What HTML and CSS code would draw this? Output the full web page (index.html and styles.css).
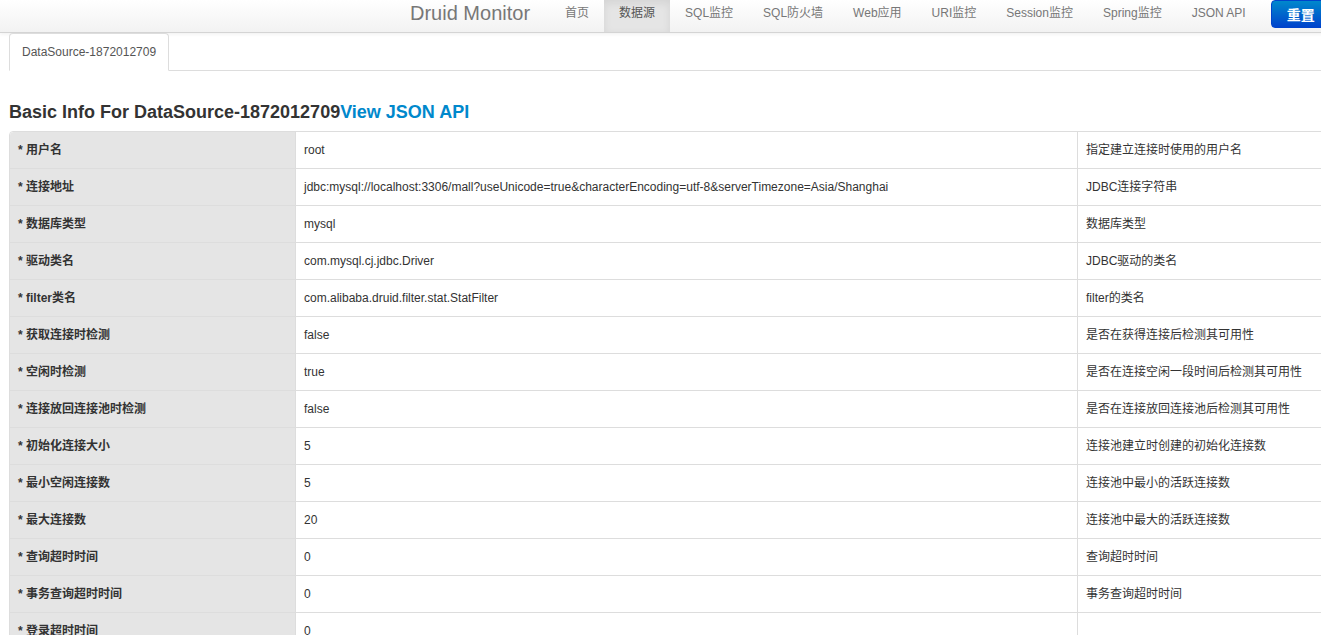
FILE: index.html
```html
<!DOCTYPE html>
<html lang="zh-CN">
<head>
<meta charset="utf-8">
<title>Druid Monitor</title>
<link rel="stylesheet" href="styles.css">
</head>
<body>
<div class="page">
  <header class="navbar">
    <a class="brand" href="#">Druid Monitor</a>
    <nav class="nav">
      <a href="#">首页</a>
      <a href="#" class="active">数据源</a>
      <a href="#">SQL监控</a>
      <a href="#">SQL防火墙</a>
      <a href="#">Web应用</a>
      <a href="#">URI监控</a>
      <a href="#">Session监控</a>
      <a href="#">Spring监控</a>
      <a href="#">JSON API</a>
    </nav>
    <button class="btn-reset">重置</button>
  </header>

  <main class="content">
    <ul class="tabs">
      <li class="tab active">DataSource-1872012709</li>
    </ul>

    <h3 class="title">Basic Info For DataSource-1872012709<a href="#" class="json-link">View JSON API</a></h3>

    <table class="info">
      <colgroup><col class="c1"><col class="c2"><col class="c3"></colgroup>
      <tbody>
        <tr><th>* 用户名</th><td>root</td><td>指定建立连接时使用的用户名</td></tr>
        <tr><th>* 连接地址</th><td>jdbc:mysql://localhost:3306/mall?useUnicode=true&amp;characterEncoding=utf-8&amp;serverTimezone=Asia/Shanghai</td><td>JDBC连接字符串</td></tr>
        <tr><th>* 数据库类型</th><td>mysql</td><td>数据库类型</td></tr>
        <tr><th>* 驱动类名</th><td>com.mysql.cj.jdbc.Driver</td><td>JDBC驱动的类名</td></tr>
        <tr><th>* filter类名</th><td>com.alibaba.druid.filter.stat.StatFilter</td><td>filter的类名</td></tr>
        <tr><th>* 获取连接时检测</th><td>false</td><td>是否在获得连接后检测其可用性</td></tr>
        <tr><th>* 空闲时检测</th><td>true</td><td>是否在连接空闲一段时间后检测其可用性</td></tr>
        <tr><th>* 连接放回连接池时检测</th><td>false</td><td>是否在连接放回连接池后检测其可用性</td></tr>
        <tr><th>* 初始化连接大小</th><td>5</td><td>连接池建立时创建的初始化连接数</td></tr>
        <tr><th>* 最小空闲连接数</th><td>5</td><td>连接池中最小的活跃连接数</td></tr>
        <tr><th>* 最大连接数</th><td>20</td><td>连接池中最大的活跃连接数</td></tr>
        <tr><th>* 查询超时时间</th><td>0</td><td>查询超时时间</td></tr>
        <tr><th>* 事务查询超时时间</th><td>0</td><td>事务查询超时时间</td></tr>
        <tr><th>* 登录超时时间</th><td>0</td><td></td></tr>
        <tr><th>* 连接有效性检查类名</th><td>com.alibaba.druid.pool.vendor.MySqlValidConnectionChecker</td><td></td></tr>
        <tr><th>* ExceptionSorter类名</th><td>com.alibaba.druid.pool.vendor.MySqlExceptionSorter</td><td></td></tr>
      </tbody>
    </table>
  </main>
</div>
</body>
</html>
```

FILE: styles.css
```css
html, body {
  margin: 0;
  padding: 0;
  overflow: hidden;
}
body {
  font-family: "Liberation Sans", Arial, "Noto Sans CJK SC", sans-serif;
  font-size: 12px;
  line-height: 20px;
  color: #333;
  background: #fff;
}
.page {
  width: 1500px;
}
.navbar {
  display: flex;
  align-items: flex-start;
  height: 32px;
  padding-left: 390px;
  background: linear-gradient(to bottom, #ffffff, #f2f2f2);
  border-bottom: 1px solid #d4d4d4;
  box-shadow: 0 1px 4px rgba(0,0,0,0.065);
}
.brand {
  font-size: 20px;
  line-height: 20px;
  color: #777;
  text-decoration: none;
  padding: 3px 20px 9px 20px;
}
.nav {
  display: flex;
}
.nav a {
  display: block;
  padding: 3px 15px 9px;
  line-height: 20px;
  font-size: 12px;
  color: #777;
  text-decoration: none;
}
.nav a.active {
  background: #e5e5e5;
  color: #555;
  box-shadow: inset 0 3px 8px rgba(0,0,0,0.08);
}
.btn-reset {
  margin-left: 10px;
  height: 28px;
  padding: 0 15px;
  font-family: "Liberation Sans", Arial, "Noto Sans CJK SC", sans-serif;
  font-size: 14px;
  font-weight: bold;
  color: #fff;
  border: 1px solid #0044cc;
  border-radius: 4px;
  background: linear-gradient(to bottom, #0088cc, #0044cc);
}
.content {
  padding: 0 9px;
}
.tabs {
  list-style: none;
  margin: 0;
  padding: 0;
  display: flex;
  border-bottom: 1px solid #ddd;
}
.tab {
  padding: 8px 12px;
  line-height: 20px;
  color: #555;
  margin-bottom: -1px;
  border: 1px solid transparent;
  border-radius: 4px 4px 0 0;
}
.tab.active {
  background: #fff;
  border-color: #ddd #ddd transparent;
}
.title {
  margin: 31px 0 9px;
  font-size: 18px;
  line-height: 20px;
  font-weight: bold;
  color: #333;
}
.json-link {
  color: #0088cc;
  text-decoration: none;
}
.info {
  border-collapse: separate;
  border-spacing: 0;
  width: 1480px;
  border: 1px solid #ddd;
  border-radius: 4px 0 0 0;
  table-layout: fixed;
}
.info col.c1 { width: 285px; }
.info col.c2 { width: 782px; }
.info th, .info td {
  padding: 8px;
  line-height: 20px;
  text-align: left;
  vertical-align: top;
  border-top: 1px solid #ddd;
  border-left: 1px solid #ddd;
  white-space: nowrap;
}
.info tr:first-child th, .info tr:first-child td {
  border-top: 0;
}
.info th {
  border-left: 0;
  background: #e5e5e5;
  font-weight: bold;
  color: #333;
}
.info tr:first-child th {
  border-top-left-radius: 4px;
}
```
